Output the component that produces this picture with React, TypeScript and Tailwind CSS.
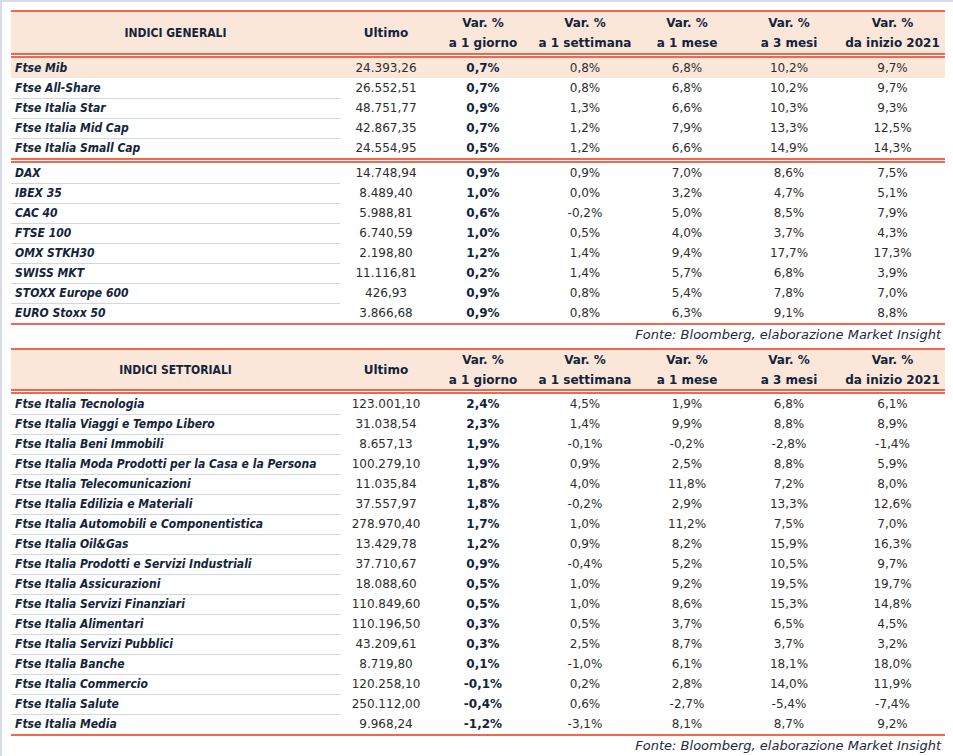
import React from "react";

type Row = [string, string, string, string, string, string, string];

const gen1: Row[] = [
  ["Ftse Mib", "24.393,26", "0,7%", "0,8%", "6,8%", "10,2%", "9,7%"],
  ["Ftse All-Share", "26.552,51", "0,7%", "0,8%", "6,8%", "10,2%", "9,7%"],
  ["Ftse Italia Star", "48.751,77", "0,9%", "1,3%", "6,6%", "10,3%", "9,3%"],
  ["Ftse Italia Mid Cap", "42.867,35", "0,7%", "1,2%", "7,9%", "13,3%", "12,5%"],
  ["Ftse Italia Small Cap", "24.554,95", "0,5%", "1,2%", "6,6%", "14,9%", "14,3%"],
];
const gen2: Row[] = [
  ["DAX", "14.748,94", "0,9%", "0,9%", "7,0%", "8,6%", "7,5%"],
  ["IBEX 35", "8.489,40", "1,0%", "0,0%", "3,2%", "4,7%", "5,1%"],
  ["CAC 40", "5.988,81", "0,6%", "-0,2%", "5,0%", "8,5%", "7,9%"],
  ["FTSE 100", "6.740,59", "1,0%", "0,5%", "4,0%", "3,7%", "4,3%"],
  ["OMX STKH30", "2.198,80", "1,2%", "1,4%", "9,4%", "17,7%", "17,3%"],
  ["SWISS MKT", "11.116,81", "0,2%", "1,4%", "5,7%", "6,8%", "3,9%"],
  ["STOXX Europe 600", "426,93", "0,9%", "0,8%", "5,4%", "7,8%", "7,0%"],
  ["EURO Stoxx 50", "3.866,68", "0,9%", "0,8%", "6,3%", "9,1%", "8,8%"],
];
const sett: Row[] = [
  ["Ftse Italia Tecnologia", "123.001,10", "2,4%", "4,5%", "1,9%", "6,8%", "6,1%"],
  ["Ftse Italia Viaggi e Tempo Libero", "31.038,54", "2,3%", "1,4%", "9,9%", "8,8%", "8,9%"],
  ["Ftse Italia Beni Immobili", "8.657,13", "1,9%", "-0,1%", "-0,2%", "-2,8%", "-1,4%"],
  ["Ftse Italia Moda Prodotti per la Casa e la Persona", "100.279,10", "1,9%", "0,9%", "2,5%", "8,8%", "5,9%"],
  ["Ftse Italia Telecomunicazioni", "11.035,84", "1,8%", "4,0%", "11,8%", "7,2%", "8,0%"],
  ["Ftse Italia Edilizia e Materiali", "37.557,97", "1,8%", "-0,2%", "2,9%", "13,3%", "12,6%"],
  ["Ftse Italia Automobili e Componentistica", "278.970,40", "1,7%", "1,0%", "11,2%", "7,5%", "7,0%"],
  ["Ftse Italia Oil&Gas", "13.429,78", "1,2%", "0,9%", "8,2%", "15,9%", "16,3%"],
  ["Ftse Italia Prodotti e Servizi Industriali", "37.710,67", "0,9%", "-0,4%", "5,2%", "10,5%", "9,7%"],
  ["Ftse Italia Assicurazioni", "18.088,60", "0,5%", "1,0%", "9,2%", "19,5%", "19,7%"],
  ["Ftse Italia Servizi Finanziari", "110.849,60", "0,5%", "1,0%", "8,6%", "15,3%", "14,8%"],
  ["Ftse Italia Alimentari", "110.196,50", "0,3%", "0,5%", "3,7%", "6,5%", "4,5%"],
  ["Ftse Italia Servizi Pubblici", "43.209,61", "0,3%", "2,5%", "8,7%", "3,7%", "3,2%"],
  ["Ftse Italia Banche", "8.719,80", "0,1%", "-1,0%", "6,1%", "18,1%", "18,0%"],
  ["Ftse Italia Commercio", "120.258,10", "-0,1%", "0,2%", "2,8%", "14,0%", "11,9%"],
  ["Ftse Italia Salute", "250.112,00", "-0,4%", "0,6%", "-2,7%", "-5,4%", "-7,4%"],
  ["Ftse Italia Media", "9.968,24", "-1,2%", "-3,1%", "8,1%", "8,7%", "9,2%"],
];

const cols = "grid grid-cols-[329px_92px_102px_102px_102px_102px_105px]";
const cond = { fontFamily: '"DejaVu Sans Condensed", "DejaVu Sans", sans-serif' };

function DataRow({ r, hl, line }: { r: Row; hl?: boolean; line: boolean }) {
  return (
    <div className={`${cols} h-[20px] leading-[20px] ${hl ? "bg-[#fbe7da]" : ""}`}>
      <div
        className={`pl-[4px] whitespace-nowrap font-bold italic text-[#13243a] ${line ? "border-b border-[#cfd7e3]" : ""}`}
        style={cond}
      >
        {r[0]}
      </div>
      <div className="text-center text-[#2d2d2d]">{r[1]}</div>
      <div className="text-center font-bold text-[#13243a]">{r[2]}</div>
      <div className="text-center text-[#2d2d2d]">{r[3]}</div>
      <div className="text-center text-[#2d2d2d]">{r[4]}</div>
      <div className="text-center text-[#2d2d2d]">{r[5]}</div>
      <div className="text-center text-[#2d2d2d]">{r[6]}</div>
    </div>
  );
}

function DoubleLine() {
  return (
    <div className="flex flex-col">
      <div className="h-[2px] bg-[#f4674f]" />
      <div className="h-[1px] bg-white" />
      <div className="h-[2px] bg-[#f4674f]" />
    </div>
  );
}

function Header({ title, h40 }: { title: string; h40?: boolean }) {
  const h = ["a 1 giorno", "a 1 settimana", "a 1 mese", "a 3 mesi", "da inizio 2021"];
  return (
    <div className={`${cols} ${h40 ? "h-[39px]" : "h-[41px]"} bg-[#fbe7da] font-bold text-[#13243a]`}>
      <div className="flex items-center justify-center" style={cond}>
        {title}
      </div>
      <div className="flex items-center justify-center">Ultimo</div>
      {h.map((x) => (
        <div key={x} className="flex flex-col items-center justify-center leading-[20px]">
          <div>Var. %</div>
          <div>{x}</div>
        </div>
      ))}
    </div>
  );
}

function Fonte() {
  return (
    <div className="h-[23px] leading-[20px] text-right pr-[4px] italic text-[#1b2a3c] text-[13px] whitespace-nowrap">
      Fonte: Bloomberg, elaborazione Market Insight
    </div>
  );
}

export default function App() {
  return (
    <div
      className="w-[953px] h-[756px] bg-white border-t-2 border-l-2 border-[#d5dce8] overflow-hidden text-[12px]"
      style={{ fontFamily: '"DejaVu Sans", sans-serif' }}
    >
      <div className="ml-[9px] w-[934px] pt-[8px]">
        <div className="h-[2px] bg-[#f4674f]" />
        <Header title="INDICI GENERALI" />
        <DoubleLine />
        {gen1.map((r, i) => (
          <DataRow key={r[0]} r={r} hl={i === 0} line={i > 0 && i < gen1.length - 1} />
        ))}
        <DoubleLine />
        {gen2.map((r, i) => (
          <DataRow key={r[0]} r={r} line={i < gen2.length - 1} />
        ))}
        <div className="h-[2px] bg-[#f4674f]" />
        <Fonte />
        <div className="h-[2px] bg-[#f4674f]" />
        <Header title="INDICI SETTORIALI" h40 />
        <DoubleLine />
        {sett.map((r, i) => (
          <DataRow key={r[0]} r={r} line={i < sett.length - 1} />
        ))}
        <div className="h-[2px] bg-[#f4674f]" />
        <Fonte />
      </div>
    </div>
  );
}
